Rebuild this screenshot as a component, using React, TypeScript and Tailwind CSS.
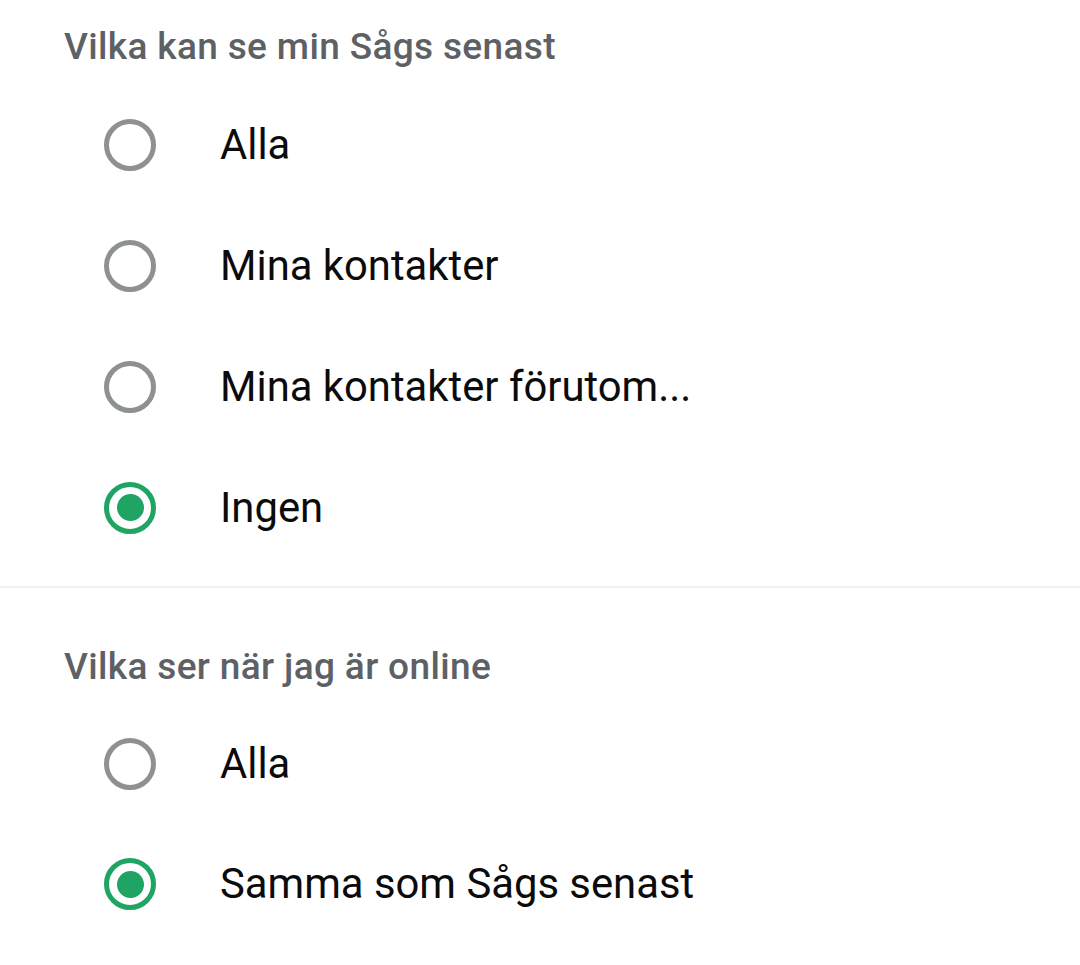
import React from "react";

type Opt = { label: string; selected?: boolean };

function Radio({ selected }: { selected?: boolean }) {
  if (selected) {
    return (
      <div className="w-[52px] h-[52px] rounded-full border-[5px] border-[#1fa463] flex items-center justify-center shrink-0">
        <div className="w-[27px] h-[27px] rounded-full bg-[#1fa463]" />
      </div>
    );
  }
  return <div className="w-[52px] h-[52px] rounded-full border-[5px] border-[#8e9194] shrink-0" />;
}

function Row({ opt, h }: { opt: Opt; h: string }) {
  return (
    <div className={`flex items-center pl-[104px] gap-[64px] ${h}`}>
      <Radio selected={opt.selected} />
      <span className="text-[41.8px] leading-[50px] text-[#0b0b0b]">{opt.label}</span>
    </div>
  );
}

function Header({ text }: { text: string }) {
  return (
    <div className="pl-[64px] text-[37px] leading-[44px] font-medium text-[#5d6165] tracking-[0.35px]">
      {text}
    </div>
  );
}

export default function App() {
  const a: Opt[] = [
    { label: "Alla" },
    { label: "Mina kontakter" },
    { label: "Mina kontakter förutom..." },
    { label: "Ingen", selected: true },
  ];
  const b: Opt[] = [{ label: "Alla" }, { label: "Samma som Sågs senast", selected: true }];
  return (
    <div
      className="min-h-screen w-full bg-white"
      style={{ fontFamily: "Roboto, 'Noto Sans', sans-serif" }}
    >
      <div className="pt-[25px]">
        <Header text="Vilka kan se min Sågs senast" />
        <div className="mt-[15px] flex flex-col">
          {a.map((o) => (
            <Row key={o.label} opt={o} h="h-[121px]" />
          ))}
        </div>
        <div className="mt-[18px] h-[2px] bg-[#f0f0f0]" />
        <div className="mt-[57px]">
          <Header text="Vilka ser när jag är online" />
        </div>
        <div className="mt-[15px] flex flex-col">
          {b.map((o) => (
            <Row key={o.label} opt={o} h="h-[120px]" />
          ))}
        </div>
      </div>
    </div>
  );
}
